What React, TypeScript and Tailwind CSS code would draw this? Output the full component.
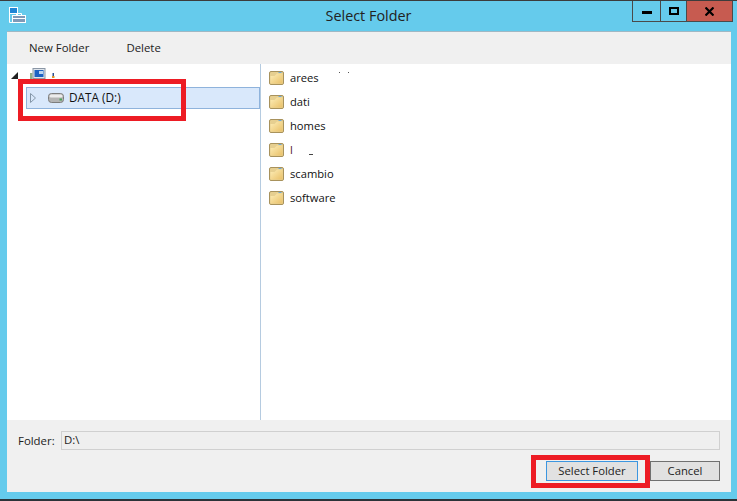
const ui = { fontFamily: '"Open Sans", "Noto Sans", sans-serif' }

function FolderIcon() {
  return (
    <svg width="15" height="14" viewBox="0 0 15 14" className="shrink-0">
      <defs>
        <linearGradient id="folderFill" x1="0" y1="0" x2="1" y2="1">
          <stop offset="0" stopColor="#fdeeb8" />
          <stop offset="1" stopColor="#e9c068" />
        </linearGradient>
      </defs>
      <path d="M0.5 2 Q0.5 0.5 2 0.5 H13 Q14.5 0.5 14.5 2 V12 Q14.5 13.5 13 13.5 H2 Q0.5 13.5 0.5 12 Z" fill="#e6cf90" stroke="#a8925c" />
      <path d="M1.5 5 H5.5 L8 2.5 H13.5 V12.5 H1.5 Z" fill="url(#folderFill)" />
      <path d="M9.5 1.5 H12.5" stroke="#6fa8d8" />
    </svg>
  )
}

function DriveIcon() {
  return (
    <svg width="16" height="10" viewBox="0 0 16 10" className="shrink-0">
      <rect x="0.5" y="0.5" width="15" height="9" rx="3" fill="#b4b4b4" stroke="#7d7d7d" />
      <rect x="1.5" y="1.5" width="13" height="3" rx="1.5" fill="#ececec" />
      <rect x="11.5" y="5.5" width="2.5" height="2" fill="#4aa35a" />
    </svg>
  )
}

function ComputerIcon() {
  return (
    <svg width="25" height="13" viewBox="0 0 25 13" className="shrink-0">
      <rect x="0" y="5" width="2.5" height="6" fill="#8fb08a" />
      <rect x="3" y="0.5" width="12" height="10" fill="#dfe5ec" stroke="#8b97a6" />
      <rect x="4.5" y="2" width="9" height="7" fill="#1c62c4" />
      <rect x="9" y="3" width="4" height="3" fill="#bcd6f2" />
      <rect x="5" y="10.5" width="9" height="1.5" fill="#9aa3ae" />
      <rect x="22.5" y="5" width="1.5" height="3" fill="#2a4f8f" />
      <rect x="22" y="8" width="2.5" height="2" fill="#e0962e" />
    </svg>
  )
}

function AppIcon() {
  return (
    <svg width="17" height="17" viewBox="0 0 17 17" fill="none" className="shrink-0">
      <rect x="0.5" y="0.5" width="8" height="6" fill="#1f86d6" stroke="#ffffff" />
      <path d="M0.5 6.5 V15.5 H3 M8.5 6.5 V8" stroke="#ffffff" />
      <rect x="3.5" y="8.5" width="13" height="7" fill="#7f9ab8" stroke="#ffffff" />
      <path d="M7.5 8.5 V6.5 H12.5 V8.5 M3.5 11.5 H16.5" stroke="#ffffff" />
    </svg>
  )
}

const folders = ['arees', 'dati', 'homes', 'l', 'scambio', 'software']

export default function App() {
  return (
    <div className="relative w-[737px] h-[501px] overflow-hidden bg-[#65cbec] border-t border-b-2 border-t-[#3c3c3c] border-b-[#2b3338] text-[#1a1a1a]" style={ui}>
      {/* Title bar */}
      <div className="relative h-[30px] flex items-center justify-center">
        <div className="absolute left-[9px] top-[6px]"><AppIcon /></div>
        <span className="text-[14.4px] text-[#222]">Select Folder</span>
        <div className="absolute right-[4px] top-0 flex h-[21px] border border-t-0 border-[#4a4a4a]">
          <div className="w-[28px] flex items-center justify-center border-r border-[#4a4a4a]">
            <div className="w-[10px] h-[3px] bg-black mt-[2px]" />
          </div>
          <div className="w-[26px] flex items-center justify-center border-r border-[#4a4a4a]">
            <div className="w-[10px] h-[8px] border-2 border-black" />
          </div>
          <div className="w-[45px] flex items-center justify-center bg-[#c75b50]">
            <svg width="9" height="9" viewBox="0 0 9 9" stroke="#000" strokeWidth="2.2"><path d="M0.5 0.5 L8.5 8.5 M8.5 0.5 L0.5 8.5" /></svg>
          </div>
        </div>
      </div>

      {/* Dialog body */}
      <div className="ml-[7px] mr-[6px] h-[461px] flex flex-col bg-[#f0f0f0]">
        <div className="h-[33px] shrink-0 flex items-center pl-[22px] gap-[37px] text-[11.4px] text-[#222] border-t border-[#9fb8c4]">
          <span>New Folder</span>
          <span>Delete</span>
        </div>

        <div className="h-[356px] shrink-0 flex bg-white">
          {/* Tree */}
          <div className="w-[254px] shrink-0 border-r border-[#b5cbe0]">
            <div className="h-[17px] pt-[4px] pl-[4px] flex items-start">
              <span className="mt-[4px] w-0 h-0 border-l-[7px] border-b-[7px] border-l-transparent border-b-[#222]" />
              <span className="ml-[12px]"><ComputerIcon /></span>
            </div>
            <div className="ml-[19px] h-[22px] mt-[6px] flex items-center bg-[#d9e8fb] border border-[#8fb3dc] text-[11.8px] text-[#111]">
              <svg width="6" height="10" viewBox="0 0 6 10" fill="none" stroke="#8496a8" className="ml-[3px] shrink-0"><path d="M0.5 0.5 L5.5 5 L0.5 9.5 Z" /></svg>
              <span className="ml-[12px]"><DriveIcon /></span>
              <span className="ml-[5px]">DATA (D:)</span>
            </div>
          </div>

          {/* Folder list */}
          <div className="flex-1 pt-[2px] pl-[8px]">
            {folders.map((name) => (
              <div key={name} className="relative h-[24px] flex items-center gap-[6px] text-[11.2px] text-[#111]">
                <FolderIcon />
                <span className={name === 'l' ? 'text-[#5a1a2a]' : ''}>{name}</span>
                {/* bits left over from the blanked-out names */}
                {name === 'arees' && (
                  <>
                    <span className="absolute left-[70px] top-[6px] w-[1px] h-[1px] bg-[#555]" />
                    <span className="absolute left-[79px] top-[6px] w-[1px] h-[1px] bg-[#555]" />
                  </>
                )}
                {name === 'l' && <span className="absolute left-[40px] top-[16px] w-[4px] h-[1px] bg-[#444]" />}
              </div>
            ))}
          </div>
        </div>

        {/* Footer */}
        <div className="flex-1 flex flex-col pl-[11px] pr-[11px] pt-[11px]">
          <div className="flex items-center text-[11.4px] text-[#222]">
            <span className="w-[43px] shrink-0">Folder:</span>
            <div className="flex-1 h-[19px] leading-[15px] px-[2px] bg-[#efefef] border border-[#d0d0d0]">D:\</div>
          </div>
          <div className="flex justify-end mt-[11px] text-[11.3px] text-[#222]">
            <div className="w-[92px] h-[20px] flex items-center justify-center bg-[#e1e1e1] border border-[#3c96e0]">Select Folder</div>
            <div className="ml-[12px] w-[70px] h-[20px] flex items-center justify-center bg-[#e1e1e1] border border-[#707070]">Cancel</div>
          </div>
        </div>
      </div>

      {/* Red annotations over the screenshot */}
      <div className="absolute left-[18px] top-[78px] w-[168px] h-[42px] border-[5px] border-[#ed1c24]" />
      <div className="absolute left-[531px] top-[454px] w-[119px] h-[33px] border-[5px] border-[#ed1c24]" />
    </div>
  )
}
